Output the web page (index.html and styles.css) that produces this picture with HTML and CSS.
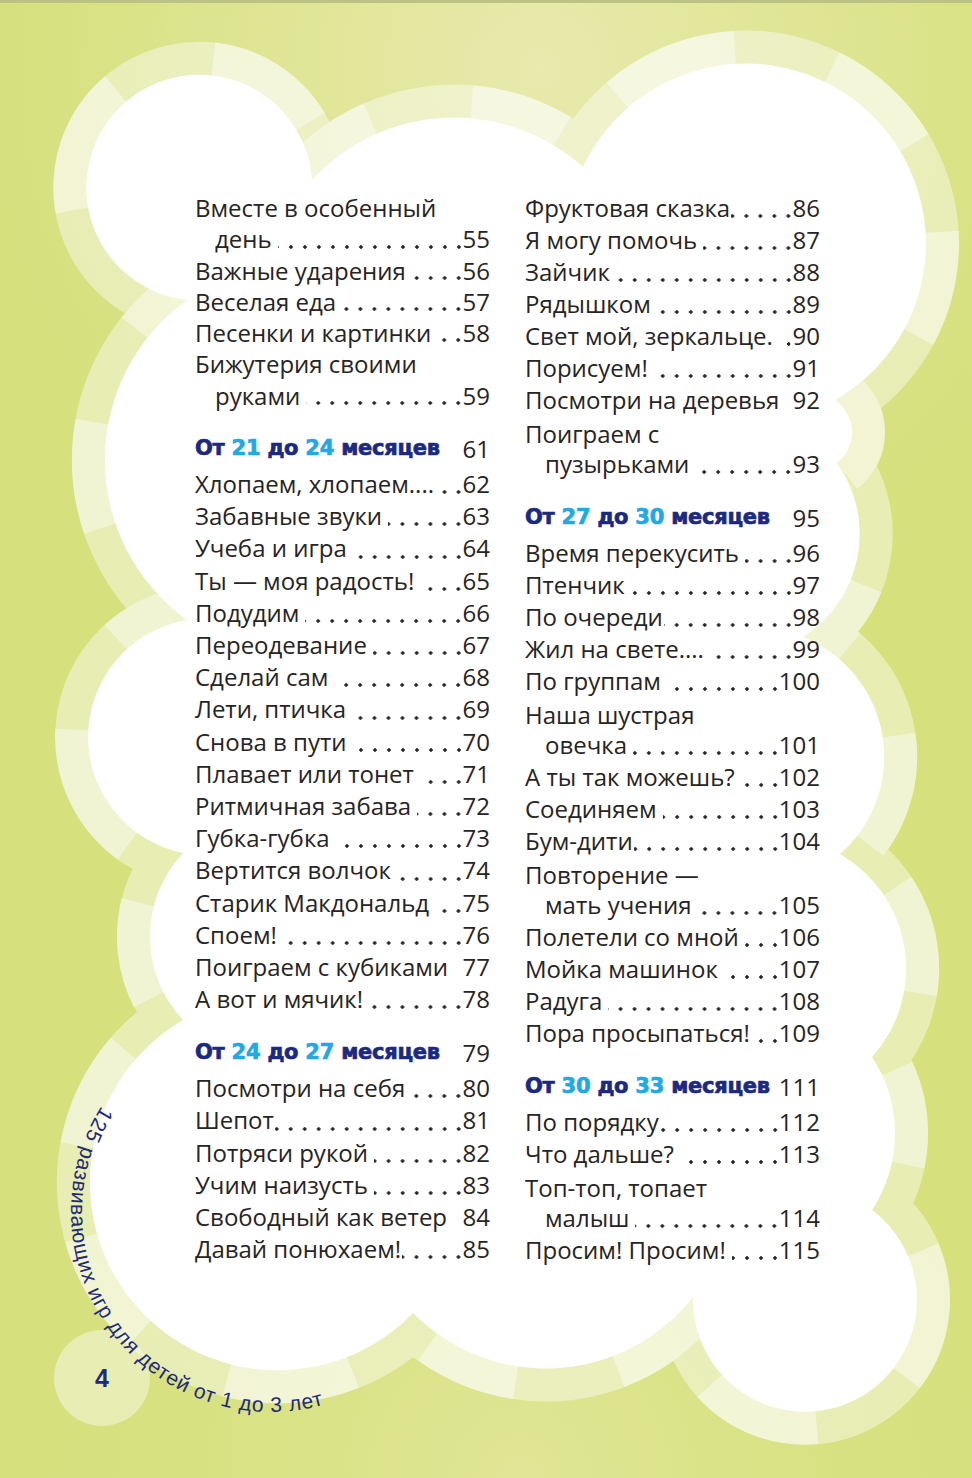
FILE: index.html
```html
<!DOCTYPE html>
<html lang="ru">
<head>
<meta charset="utf-8">
<title>Содержание</title>
<link rel="stylesheet" href="styles.css">
</head>
<body>
<div class="page">
  <svg class="art" width="972" height="1478" viewBox="0 0 972 1478" xmlns="http://www.w3.org/2000/svg">
    <defs>
      <radialGradient id="hiTop" cx="540" cy="70" r="620" gradientUnits="userSpaceOnUse">
        <stop offset="0" stop-color="#e8eaae"/>
        <stop offset="0.55" stop-color="#e2e79c" stop-opacity="0.6"/>
        <stop offset="1" stop-color="#d8e182" stop-opacity="0"/>
      </radialGradient>
      <radialGradient id="hiBot" cx="520" cy="1478" r="560" gradientUnits="userSpaceOnUse">
        <stop offset="0" stop-color="#e0e696"/>
        <stop offset="1" stop-color="#d8e182" stop-opacity="0"/>
      </radialGradient>
      <path id="cloud" d="M 312 180 A 193 193 0 0 1 583 167 A 180 180 0 1 1 835 400 A 39 39 0 0 1 837 463 A 122 122 0 0 1 803 637 A 129 129 0 0 1 840 854 A 132 132 0 0 1 872 1057 A 139 139 0 0 1 872 1210 A 112 112 0 1 1 693 1297 A 187 187 0 0 1 413 1313 A 188 188 0 1 1 183 1020 A 122 122 0 0 1 183 853 A 118.5 118.5 0 0 1 187 620 A 197 197 0 0 1 187 300 A 113 113 0 1 1 312 180 Z"/>
      <path id="arcText" d="M 101.4 1106 A 200 200 0 0 0 371 1385.2" fill="none"/>
    </defs>
    <rect class="bg-base" x="0" y="0" width="972" height="1478"/>
    <rect x="0" y="0" width="972" height="1478" fill="url(#hiTop)"/>
    <rect x="0" y="0" width="972" height="1478" fill="url(#hiBot)"/>
    <rect class="top-edge" x="0" y="0" width="972" height="3"/>
    <circle class="pg-circle" cx="102" cy="1378" r="48"/>
    <use href="#cloud" class="ring-base"/>
    <use href="#cloud" class="ring-dash"/>
    <use href="#cloud" class="cloud-fill"/>
    <text class="arc"><textPath href="#arcText">125 развивающих игр для детей от 1 до 3 лет</textPath></text>
    <text class="pnum" x="102" y="1387" text-anchor="middle">4</text>
  </svg>

  <div class="toc">
    <div class="col col-left">
      <div class="line s1">Вместе в особенный</div>
      <div class="row ind s1"><span class="t">день</span><span class="lead"></span><span class="n">55</span></div>
      <div class="row s1"><span class="t">Важные ударения</span><span class="lead"></span><span class="n">56</span></div>
      <div class="row s1"><span class="t">Веселая еда</span><span class="lead tight"></span><span class="n">57</span></div>
      <div class="row s1"><span class="t">Песенки и картинки</span><span class="lead"></span><span class="n">58</span></div>
      <div class="line s1">Бижутерия своими</div>
      <div class="row ind s1"><span class="t">руками</span><span class="lead"></span><span class="n">59</span></div>

      <div class="head"><span class="h">От <b>21</b> до <b>24</b> месяцев</span><span class="n">61</span></div>
      <div class="row"><span class="t">Хлопаем, хлопаем....</span><span class="lead"></span><span class="n">62</span></div>
      <div class="row"><span class="t">Забавные звуки</span><span class="lead"></span><span class="n">63</span></div>
      <div class="row"><span class="t">Учеба и игра</span><span class="lead"></span><span class="n">64</span></div>
      <div class="row"><span class="t">Ты — моя радость!</span><span class="lead"></span><span class="n">65</span></div>
      <div class="row"><span class="t">Подудим</span><span class="lead"></span><span class="n">66</span></div>
      <div class="row"><span class="t">Переодевание</span><span class="lead"></span><span class="n">67</span></div>
      <div class="row"><span class="t">Сделай сам</span><span class="lead"></span><span class="n">68</span></div>
      <div class="row"><span class="t">Лети, птичка</span><span class="lead"></span><span class="n">69</span></div>
      <div class="row"><span class="t">Снова в пути</span><span class="lead"></span><span class="n">70</span></div>
      <div class="row"><span class="t">Плавает или тонет</span><span class="lead"></span><span class="n">71</span></div>
      <div class="row"><span class="t">Ритмичная забава</span><span class="lead"></span><span class="n">72</span></div>
      <div class="row"><span class="t">Губка-губка</span><span class="lead"></span><span class="n">73</span></div>
      <div class="row"><span class="t">Вертится волчок</span><span class="lead"></span><span class="n">74</span></div>
      <div class="row"><span class="t">Старик Макдональд</span><span class="lead"></span><span class="n">75</span></div>
      <div class="row"><span class="t">Споем!</span><span class="lead"></span><span class="n">76</span></div>
      <div class="row"><span class="t">Поиграем с кубиками</span><span class="gap"></span><span class="n">77</span></div>
      <div class="row"><span class="t">А вот и мячик!</span><span class="lead"></span><span class="n">78</span></div>

      <div class="head"><span class="h">От <b>24</b> до <b>27</b> месяцев</span><span class="n">79</span></div>
      <div class="row"><span class="t">Посмотри на себя</span><span class="lead"></span><span class="n">80</span></div>
      <div class="row"><span class="t">Шепот</span><span class="lead tight"></span><span class="n">81</span></div>
      <div class="row"><span class="t">Потряси рукой</span><span class="lead"></span><span class="n">82</span></div>
      <div class="row"><span class="t">Учим наизусть</span><span class="lead"></span><span class="n">83</span></div>
      <div class="row"><span class="t">Свободный как ветер</span><span class="gap"></span><span class="n">84</span></div>
      <div class="row"><span class="t">Давай понюхаем!</span><span class="lead tight"></span><span class="n">85</span></div>
    </div>

    <div class="col col-right">
      <div class="row"><span class="t">Фруктовая сказка</span><span class="lead tight"></span><span class="n">86</span></div>
      <div class="row"><span class="t">Я могу помочь</span><span class="lead"></span><span class="n">87</span></div>
      <div class="row"><span class="t">Зайчик</span><span class="lead"></span><span class="n">88</span></div>
      <div class="row"><span class="t">Рядышком</span><span class="lead tight"></span><span class="n">89</span></div>
      <div class="row"><span class="t">Свет мой, зеркальце.</span><span class="lead"></span><span class="n">90</span></div>
      <div class="row"><span class="t">Порисуем!</span><span class="lead"></span><span class="n">91</span></div>
      <div class="row"><span class="t">Посмотри на деревья</span><span class="gap"></span><span class="n">92</span></div>
      <div class="line wrap">Поиграем с</div>
      <div class="row ind"><span class="t">пузырьками</span><span class="lead"></span><span class="n">93</span></div>

      <div class="head"><span class="h">От <b>27</b> до <b>30</b> месяцев</span><span class="n">95</span></div>
      <div class="row"><span class="t">Время перекусить</span><span class="lead"></span><span class="n">96</span></div>
      <div class="row"><span class="t">Птенчик</span><span class="lead"></span><span class="n">97</span></div>
      <div class="row"><span class="t">По очереди</span><span class="lead tight"></span><span class="n">98</span></div>
      <div class="row"><span class="t">Жил на свете....</span><span class="lead"></span><span class="n">99</span></div>
      <div class="row"><span class="t">По группам</span><span class="lead"></span><span class="n">100</span></div>
      <div class="line wrap">Наша шустрая</div>
      <div class="row ind"><span class="t">овечка</span><span class="lead"></span><span class="n">101</span></div>
      <div class="row"><span class="t">А ты так можешь?</span><span class="lead tight"></span><span class="n">102</span></div>
      <div class="row"><span class="t">Соединяем</span><span class="lead"></span><span class="n">103</span></div>
      <div class="row"><span class="t">Бум-дити</span><span class="lead tight"></span><span class="n">104</span></div>
      <div class="line wrap">Повторение —</div>
      <div class="row ind"><span class="t">мать учения</span><span class="lead"></span><span class="n">105</span></div>
      <div class="row"><span class="t">Полетели со мной</span><span class="lead"></span><span class="n">106</span></div>
      <div class="row"><span class="t">Мойка машинок</span><span class="lead"></span><span class="n">107</span></div>
      <div class="row"><span class="t">Радуга</span><span class="lead"></span><span class="n">108</span></div>
      <div class="row"><span class="t">Пора просыпаться!</span><span class="lead"></span><span class="n">109</span></div>

      <div class="head"><span class="h">От <b>30</b> до <b>33</b> месяцев</span><span class="n">111</span></div>
      <div class="row"><span class="t">По порядку</span><span class="lead tight"></span><span class="n">112</span></div>
      <div class="row"><span class="t">Что дальше?</span><span class="lead"></span><span class="n">113</span></div>
      <div class="line wrap">Топ-топ, топает</div>
      <div class="row ind"><span class="t">малыш</span><span class="lead"></span><span class="n">114</span></div>
      <div class="row"><span class="t">Просим! Просим!</span><span class="lead"></span><span class="n">115</span></div>
    </div>
  </div>
</div>
</body>
</html>
```

FILE: styles.css
```css
html, body {
  margin: 0;
  padding: 0;
  background: #d8e182;
}

.page {
  position: relative;
  width: 972px;
  height: 1478px;
  overflow: hidden;
  font-family: "Open Sans", "DejaVu Sans", sans-serif;
  color: #262424;
}

.art {
  position: absolute;
  left: 0;
  top: 0;
  display: block;
}

.bg-base { fill: #d6e07c; }
.top-edge { fill: #bcc284; }

.pg-circle { fill: rgba(255, 255, 255, 0.42); }

.ring-base {
  fill: none;
  stroke: rgba(255, 255, 255, 0.42);
  stroke-width: 66;
  stroke-linejoin: round;
}

.ring-dash {
  fill: none;
  stroke: rgba(255, 255, 255, 0.42);
  stroke-width: 66;
  stroke-dasharray: 100 96 88 112 118 92 104 86;
  stroke-dashoffset: 20;
}

.cloud-fill { fill: #ffffff; stroke: none; }

.arc {
  font-family: "Liberation Sans", Arial, sans-serif;
  font-size: 21px;
  letter-spacing: 0.8px;
  fill: #1f2a78;
}

.pnum {
  font-family: "Liberation Sans", Arial, sans-serif;
  font-weight: 700;
  font-size: 25px;
  fill: #1f2a78;
}

/* table of contents */
.toc {
  position: relative;
  display: grid;
  grid-template-columns: 295px 295px;
  column-gap: 35px;
  padding: 192px 0 0 195px;
}

.col {
  display: flex;
  flex-direction: column;
}

.line,
.row {
  line-height: 32px;
  font-size: 24px;
  white-space: nowrap;
}

.col-left .line,
.col-left .row {
  height: 32.2px;
}

.col-right .line,
.col-right .row {
  height: 32px;
}

.col-left .s1 {
  height: 31.3px;
}

.col-right .line.wrap {
  margin-top: 2px;
  height: 30px;
}

.row {
  display: flex;
  align-items: baseline;
}

.ind { padding-left: 20px; }

.t { flex: none; }

.lead {
  flex: 1 1 auto;
  align-self: stretch;
  margin-left: 6px;
  background-image: radial-gradient(circle at 10px 50%, #262424 1.45px, rgba(38, 36, 36, 0) 2px);
  background-size: 14px 4px;
  background-repeat: repeat-x;
  background-position: right 0 bottom 6px;
}

.lead.tight { margin-left: 1px; }

.gap { flex: 1 1 auto; }

.n { flex: none; }

.head {
  display: flex;
  align-items: center;
  justify-content: space-between;
  height: 34px;
  margin: 20px 0 3px;
  white-space: nowrap;
}

.head .h {
  font-family: "DejaVu Sans", "Liberation Sans", sans-serif;
  font-weight: 700;
  font-size: 21px;
  letter-spacing: -0.25px;
  color: #1b2a80;
  -webkit-text-stroke: 0.7px #1b2a80;
}

.head .h b {
  font-weight: 700;
  color: #22a8e2;
  -webkit-text-stroke: 0.7px #22a8e2;
}

.head .n {
  font-size: 24px;
  color: #262424;
}
```
